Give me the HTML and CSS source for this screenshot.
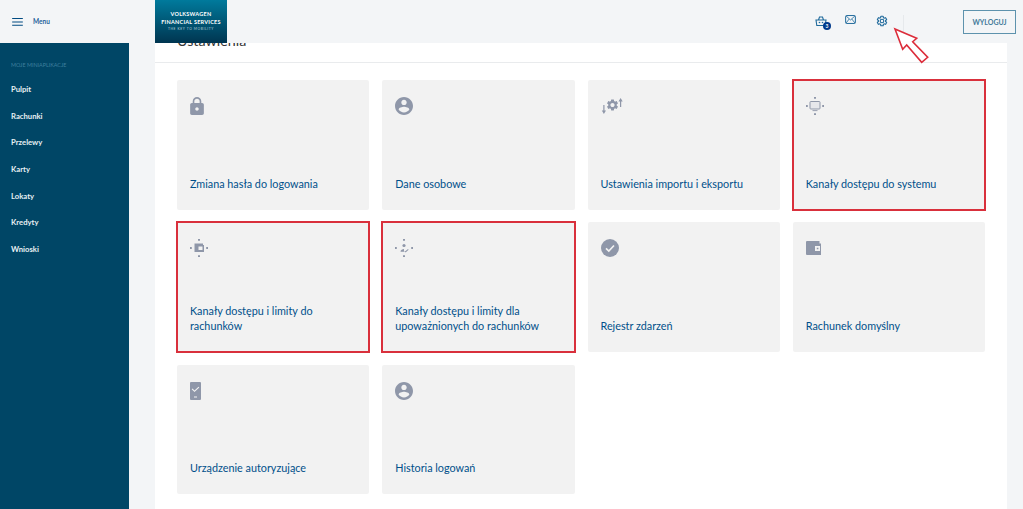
FILE: index.html
```html
<!DOCTYPE html>
<html lang="pl">
<head>
  <meta charset="UTF-8">
  <meta name="viewport" content="width=device-width, initial-scale=1.0">
  <title>Ustawienia</title>
  <link rel="stylesheet" href="styles.css">
</head>
<body>
  <svg class="sprites" aria-hidden="true">
    <symbol id="i-person" viewBox="2 2 20 20"><path d="M12 2C6.48 2 2 6.48 2 12s4.48 10 10 10 10-4.48 10-10S17.52 2 12 2zm0 3c1.66 0 3 1.34 3 3s-1.34 3-3 3-3-1.34-3-3 1.34-3 3-3zm0 14.2c-2.5 0-4.71-1.28-6-3.22.03-1.99 4-3.08 6-3.08 1.99 0 5.97 1.09 6 3.08-1.29 1.94-3.5 3.22-6 3.22z"/></symbol>
    <symbol id="i-gear" viewBox="0 0 24 24"><path d="M19.14 12.94c.04-.3.06-.61.06-.94 0-.32-.02-.64-.07-.94l2.03-1.58c.18-.14.23-.41.12-.61l-1.92-3.32c-.12-.22-.37-.29-.59-.22l-2.39.96c-.5-.38-1.03-.7-1.62-.94l-.36-2.54c-.04-.24-.24-.41-.48-.41h-3.84c-.24 0-.43.17-.47.41l-.36 2.54c-.59.24-1.13.57-1.62.94l-2.39-.96c-.22-.08-.47 0-.59.22L2.74 8.87c-.12.21-.08.47.12.61l2.03 1.58c-.05.3-.09.63-.09.94s.02.64.07.94l-2.03 1.58c-.18.14-.23.41-.12.61l1.92 3.32c.12.22.37.29.59.22l2.39-.96c.5.38 1.03.7 1.62.94l.36 2.54c.05.24.24.41.48.41h3.84c.24 0 .44-.17.47-.41l.36-2.54c.59-.24 1.13-.56 1.62-.94l2.39.96c.22.08.47 0 .59-.22l1.92-3.32c.12-.22.07-.47-.12-.61l-2.01-1.58zM12 15.6c-1.98 0-3.6-1.62-3.6-3.6s1.62-3.6 3.6-3.6 3.6 1.62 3.6 3.6-1.62 3.6-3.6 3.6z"/></symbol>
    <symbol id="i-dots" viewBox="0 0 18 18"><path d="M8 0h2v1.8H8zM8 16.2h2V18H8zM0 8h1.8v2H0zM16.2 8H18v2h-1.8z"/></symbol>
  </svg>

  <header class="topbar">
    <div class="menu-toggle">
      <svg class="burger" viewBox="0 0 12 9"><path d="M0 0h12v1.2H0zM0 3.8h12V5H0zM0 7.6h12v1.2H0z"/></svg>
      <span>Menu</span>
    </div>
    <div class="logo">
      <span>VOLKSWAGEN</span>
      <span>FINANCIAL SERVICES</span>
      <small>THE KEY TO MOBILITY</small>
    </div>
    <div class="actions">
      <div class="action basket">
        <svg viewBox="0 0 12 12"><path d="M1 5h10l-.8 5.500H1.800zM3.500 5l1-3h3l1 3" fill="none" stroke="currentColor" stroke-width="1.100"/><circle cx="4.500" cy="7.500" r=".8"/><circle cx="7.500" cy="7.500" r=".8"/></svg>
        <span class="badge">3</span>
      </div>
      <div class="action mail">
        <svg viewBox="0 0 12 10"><rect x=".6" y=".6" width="10.800" height="8.800" rx="1" fill="none" stroke="currentColor" stroke-width="1.100"/><path d="M1 1l5 4.500L11 1M1 9l3.500-4.500M11 9L7.500 4.500" fill="none" stroke="currentColor" stroke-width=".9"/></svg>
      </div>
      <div class="action gear">
        <svg viewBox="0 0 24 24"><use href="#i-gear" fill="none" stroke="currentColor" stroke-width="2.200"/></svg>
      </div>
    </div>
    <div class="sep"></div>
    <button class="logout">WYLOGUJ</button>
  </header>

  <svg class="arrow" viewBox="0 0 40 42"><path d="M5 5l21.700 9.300-4 3.400 15 15.600-6 5-15-17.300-4 4.300z" fill="#fff" stroke="#dc2c3a" stroke-width="1.600"/></svg>

  <div class="layout">
    <nav class="sidebar">
      <div class="sidebar-head">MOJE MINIAPLIKACJE</div>
      <a>Pulpit</a>
      <a>Rachunki</a>
      <a>Przelewy</a>
      <a>Karty</a>
      <a>Lokaty</a>
      <a>Kredyty</a>
      <a>Wnioski</a>
    </nav>

    <main class="panel">
      <h1>Ustawienia</h1>
      <div class="cards">
        <div class="card">
          <svg class="icon lock" viewBox="4 1 16 21"><path d="M18 8h-1V6c0-2.760-2.240-5-5-5S7 3.240 7 6v2H6c-1.100 0-2 .9-2 2v10c0 1.100.9 2 2 2h12c1.100 0 2-.9 2-2V10c0-1.100-.9-2-2-2zm-6 9c-1.100 0-2-.9-2-2s.9-2 2-2 2 .9 2 2-.9 2-2 2zm3.100-9H8.900V6c0-1.710 1.390-3.100 3.100-3.100 1.710 0 3.100 1.390 3.100 3.100v2z"/></svg>
          <span class="label">Zmiana hasła do logowania</span>
        </div>
        <div class="card">
          <svg class="icon"><use href="#i-person"/></svg>
          <span class="label">Dane osobowe</span>
        </div>
        <div class="card">
          <svg class="icon wide" viewBox="0 0 22 16"><use href="#i-gear" x="4.500" y="0" width="14" height="14"/><path d="M2.300 7h1.200v5.500H5L2.900 16 .8 12.500h1.500zM19 3.500h-1.500L19.600 0l2.100 3.500h-1.500V9H19z"/></svg>
          <span class="label">Ustawienia importu i eksportu</span>
        </div>
        <div class="card marked">
          <svg class="icon" viewBox="0 0 18 18"><use href="#i-dots" width="18" height="18"/><rect x="4" y="4.500" width="10" height="7.500" rx=".8" fill="#e6e7eb" stroke="currentColor" stroke-width="1"/><path d="M6.500 13.200h5v.9h-5z"/></svg>
          <span class="label">Kanały dostępu do systemu</span>
        </div>
        <div class="card marked">
          <svg class="icon" viewBox="0 0 18 18"><use href="#i-dots" width="18" height="18"/><path d="M4.500 4.500h8.500v1.500h1v7H4.500zm4 3v3.500h4V7.500z" fill-rule="evenodd"/></svg>
          <span class="label">Kanały dostępu i limity do rachunków</span>
        </div>
        <div class="card marked">
          <svg class="icon" viewBox="0 0 18 18"><use href="#i-dots" width="18" height="18"/><circle cx="9" cy="6.500" r="1.600"/><path d="M5.500 12.800c0-1.900 2-2.800 3.500-2.800v2.200l2 .6zM10 12.500l3-2.500.6.7-3 2.700z"/></svg>
          <span class="label">Kanały dostępu i limity dla upoważnionych do rachunków</span>
        </div>
        <div class="card">
          <svg class="icon" viewBox="0 0 18 18"><circle cx="9" cy="9" r="9"/><path d="M5 9.300l2.800 2.700L13 6.500" fill="none" stroke="#f2f2f2" stroke-width="1.700"/></svg>
          <span class="label">Rejestr zdarzeń</span>
        </div>
        <div class="card">
          <svg class="icon wallet" viewBox="0 0 15 15"><path d="M1 0h12.500v2.500H15V14H1a1 1 0 0 1-1-1V1a1 1 0 0 1 1-1zm8 5v5h5V5zm1.800 1.700h1.600v1.600h-1.600z" fill-rule="evenodd"/></svg>
          <span class="label">Rachunek domyślny</span>
        </div>
        <div class="card">
          <svg class="icon device" viewBox="0 0 11 18"><path d="M1 0h9a1 1 0 0 1 1 1v16a1 1 0 0 1-1 1H1a1 1 0 0 1-1-1V1a1 1 0 0 1 1-1zm1.500 6.500l-.8.8L4.500 10l4.800-4.500-.8-.8-4 3.700zM4 14.500v1h3v-1z" fill-rule="evenodd"/></svg>
          <span class="label">Urządzenie autoryzujące</span>
        </div>
        <div class="card">
          <svg class="icon"><use href="#i-person"/></svg>
          <span class="label">Historia logowań</span>
        </div>
      </div>
    </main>
  </div>
</body>
</html>
```

FILE: styles.css
```css
html, body {
  height: 100%;
}

body {
  margin: 0;
  overflow: hidden;
  background-color: #f3f5f7;
  font-family: "Lato", "Open Sans", sans-serif;
  color: #00508a;
}

.sprites {
  display: none;
}

.topbar {
  position: fixed;
  top: 0;
  left: 0;
  right: 0;
  height: 43px;
  background-color: #f3f5f7;
  display: flex;
  align-items: center;
  z-index: 10;
}

.menu-toggle {
  width: 155px;
  padding-left: 12px;
  box-sizing: border-box;
  display: flex;
  align-items: center;
  gap: 10px;
  font-size: 6.500px;
  font-weight: 700;
  color: #1f5f9a;
}

.burger {
  width: 11px;
  height: 8px;
  fill: #004b82;
}

.logo {
  width: 72px;
  height: 43px;
  padding-top: 2px;
  box-sizing: border-box;
  background: linear-gradient(#007a9c, #003550);
  color: #fff;
  display: flex;
  flex-direction: column;
  align-items: center;
  justify-content: center;
  font-size: 5.500px;
  font-weight: 700;
  letter-spacing: 0.25px;
  line-height: 7.500px;
}

.logo small {
  font-size: 3.300px;
  font-weight: 400;
  letter-spacing: 0.6px;
  line-height: 7.500px;
  color: #b5d3df;
}

.actions {
  margin-left: 588px;
  display: flex;
  align-items: flex-start;
  height: 43px;
  color: #1f6a9c;
}

.action {
  position: relative;
  margin-top: 15px;
}

.action svg {
  display: block;
  fill: currentColor;
}

.basket {
  width: 30px;
}

.basket svg {
  width: 12px;
  height: 12px;
}

.badge {
  position: absolute;
  left: 8px;
  top: 7px;
  width: 8px;
  height: 8px;
  border-radius: 50%;
  background-color: #003a8c;
  color: #fff;
  font-size: 5px;
  font-weight: 700;
  line-height: 8px;
  text-align: center;
}

.mail {
  width: 30.500px;
}

.mail svg {
  width: 11px;
  height: 9px;
}

.gear {
  width: 12px;
}

.gear svg {
  width: 12px;
  height: 12px;
}

.sep {
  width: 1px;
  height: 20px;
  margin-left: 15px;
  margin-top: 6px;
  background-color: #e6e9ec;
}

.logout {
  margin-left: 59.500px;
  width: 53px;
  height: 24px;
  padding: 0;
  background: transparent;
  border: 1.500px solid #5d92ad;
  font-family: inherit;
  font-size: 7px;
  font-weight: 700;
  color: #447a9a;
}

.arrow {
  position: fixed;
  left: 890px;
  top: 24px;
  width: 40px;
  height: 42px;
  z-index: 11;
}

.layout {
  display: flex;
  height: 100%;
}

.sidebar {
  width: 129px;
  margin-top: 43px;
  padding: 18px 0 0 11px;
  box-sizing: border-box;
  background-color: #004666;
  display: flex;
  flex-direction: column;
}

.sidebar-head {
  font-size: 5.400px;
  line-height: 8px;
  color: #3f7f9e;
  margin-bottom: 7px;
}

.sidebar a {
  height: 26.670px;
  line-height: 26.670px;
  font-size: 7.700px;
  font-weight: 700;
  color: #e8f0f4;
}

.panel {
  width: 852px;
  margin-left: 26px;
  padding: 0 22px;
  box-sizing: border-box;
  background-color: #fff;
}

.panel h1 {
  margin: 0 -22px 17px;
  height: 63px;
  padding: 31px 0 0 22px;
  box-sizing: border-box;
  border-bottom: 1px solid #e9ebed;
  font-size: 14.300px;
  font-weight: 400;
  line-height: 20px;
  color: #333;
}

.cards {
  display: grid;
  grid-template-columns: repeat(4, 1fr);
  grid-auto-rows: 129.500px;
  gap: 12.900px 13px;
}

.card {
  background-color: #f2f2f2;
  padding: 17px 13px 19px;
  box-sizing: border-box;
  display: flex;
  flex-direction: column;
  justify-content: space-between;
  align-items: flex-start;
  border-radius: 2px;
  color: #8f97a9;
}

.card.marked {
  outline: 2px solid #d9303c;
  outline-offset: -1px;
  border-radius: 0;
}

.icon {
  width: 18px;
  height: 18px;
  fill: currentColor;
}

.icon.lock {
  width: 14px;
}

.icon.wide {
  width: 22px;
  height: 16px;
  margin-top: 1px;
}

.icon.wallet {
  width: 15px;
  height: 15px;
  margin-top: 2px;
}

.icon.device {
  width: 11px;
}

.label {
  font-size: 10.800px;
  line-height: 15px;
  color: #00508a;
}
```
